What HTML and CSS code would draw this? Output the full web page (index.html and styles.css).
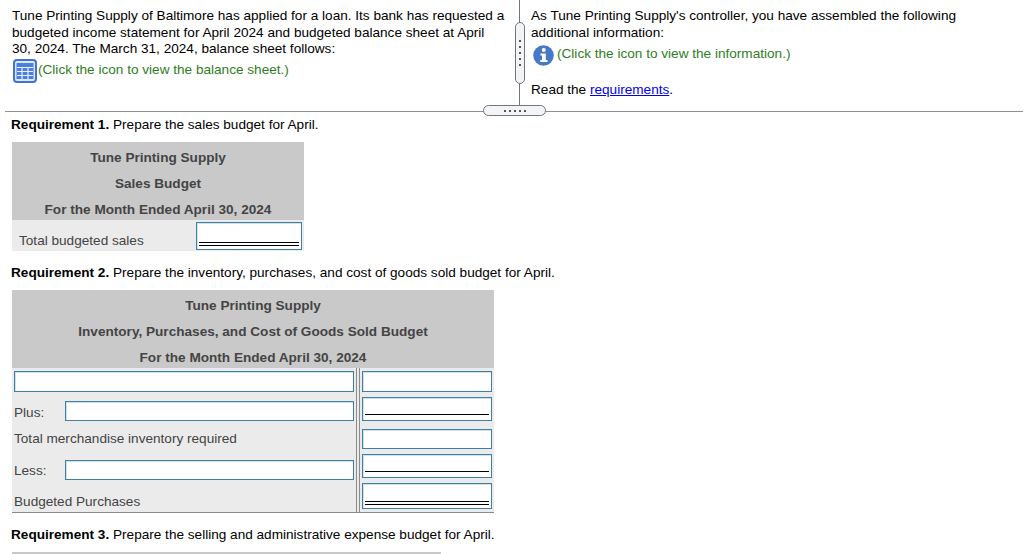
FILE: index.html
```html
<!DOCTYPE html>
<html lang="en">
<head>
<meta charset="utf-8">
<title>Tune Printing Supply</title>
<link rel="stylesheet" href="styles.css">
</head>
<body>
<div class="top">
  <div class="pane-left">
    <p class="intro">Tune Printing Supply of Baltimore has applied for a loan. Its bank has requested a budgeted income statement for April 2024 and budgeted balance sheet at April 30, 2024. The March 31, 2024, balance sheet follows:</p>
    <p class="click click-grid">
      <svg class="icon-grid" width="24" height="24" viewBox="0 0 24 24"><rect x="1" y="1" width="22" height="22" rx="3" fill="#dfe8f8" stroke="#3f74d6" stroke-width="2"/><rect x="3.500" y="4" width="17" height="16" fill="#4a7fdc"/><path d="M4 8.500H20M4 12.500H20M4 16.500H20M9 8V20M15 8V20" stroke="#e8effb" stroke-width="1.200"/></svg>
      <span>(Click the icon to view the balance sheet.)</span>
    </p>
  </div>
  <div class="pane-right">
    <p class="intro">As Tune Printing Supply's controller, you have assembled the following additional information:</p>
    <p class="click click-info">
      <svg class="icon-info" width="21" height="21" viewBox="0 0 21 21"><circle cx="10.500" cy="10.500" r="10.300" fill="#4678c8"/><circle cx="10.800" cy="5" r="2" fill="#fff"/><path d="M7.500 8.500H12.800V15H14.500V17H7.200V15H9V10.500H7.500Z" fill="#fff"/></svg>
      <span>(Click the icon to view the information.)</span>
    </p>
    <p class="read">Read the <a href="#req">requirements</a>.</p>
  </div>
  <div class="handle-v"><i></i><i></i><i></i><i></i><i></i></div>
  <div class="handle-h"><i></i><i></i><i></i><i></i><i></i></div>
</div>

<main class="content">
  <p class="req first"><b>Requirement 1.</b> Prepare the sales budget for April.</p>
  <section class="sheet sheet-sales">
    <header class="sheet-head">
      <div>Tune Printing Supply</div>
      <div>Sales Budget</div>
      <div>For the Month Ended April 30, 2024</div>
    </header>
    <div class="sales-row">
      <span class="label">Total budgeted sales</span>
      <div class="box box-sales"><span class="rule double"></span></div>
    </div>
  </section>

  <p class="req second"><b>Requirement 2.</b> Prepare the inventory, purchases, and cost of goods sold budget for April.</p>
  <section class="sheet sheet-inv">
    <header class="sheet-head">
      <div>Tune Printing Supply</div>
      <div>Inventory, Purchases, and Cost of Goods Sold Budget</div>
      <div>For the Month Ended April 30, 2024</div>
    </header>
    <div class="inv-body">
      <div class="inv-left">
        <div class="box box-wide"></div>
        <div class="line line-plus"><span class="label tag">Plus:</span><div class="box box-fill"></div></div>
        <div class="label line-total">Total merchandise inventory required</div>
        <div class="line line-less"><span class="label tag">Less:</span><div class="box box-fill"></div></div>
        <div class="label line-budget">Budgeted Purchases</div>
      </div>
      <div class="inv-right">
        <div class="box h21"></div>
        <div class="box h24"><span class="rule single"></span></div>
        <div class="box h20 gap8"></div>
        <div class="box h24"><span class="rule single"></span></div>
        <div class="box h26"><span class="rule double"></span></div>
      </div>
    </div>
  </section>

  <p class="req third"><b>Requirement 3.</b> Prepare the selling and administrative expense budget for April.</p>
  <div class="next-bar"></div>
</main>
</body>
</html>
```

FILE: styles.css
```css
* { box-sizing: border-box; }
html, body { margin: 0; padding: 0; }
body {
  width: 1024px;
  height: 554px;
  overflow: hidden;
  background: #fff;
  color: #000;
  font-family: "Liberation Sans", Arial, sans-serif;
  font-size: 13.6px;
  line-height: 16.5px;
}
p { margin: 0; }

.top {
  position: relative;
  display: flex;
  height: 112px;
  margin-left: 5px;
  margin-right: 1px;
  border-bottom: 1px solid #8c9298;
}
.pane-left {
  width: 515px;
  height: 111px;
  padding: 8px 13px 0 7px;
  border-right: 1px solid #6f767c;
}
.pane-right {
  flex: 1;
  padding: 8px 40px 0 11px;
}
.click {
  display: flex;
  align-items: center;
  color: #2f7d1e;
}
.click-grid { margin-top: 1px; margin-left: 1px; }
.click-grid span { margin-left: 1px; }
.icon-grid { flex: none; }
.click-info { margin-top: 4px; margin-left: 2px; }
.click-info span { margin-left: 3px; margin-top: -2px; }
.icon-info { flex: none; }
.read { margin-top: 16px; }
.read a { color: #0000ee; text-decoration: underline; }

.handle-v {
  position: absolute;
  left: 510px;
  top: 22px;
  width: 10px;
  height: 62px;
  display: flex;
  flex-direction: column;
  align-items: center;
  justify-content: center;
  gap: 4px;
  background: #f3f4f6;
  border: 1px solid #6f767c;
  border-radius: 5px;
}
.handle-v i, .handle-h i {
  display: block;
  width: 2px;
  height: 2px;
  background: #555;
}
.handle-h {
  position: absolute;
  left: 478px;
  top: 105px;
  width: 63px;
  height: 11px;
  display: flex;
  align-items: center;
  justify-content: center;
  gap: 3px;
  background: #f3f4f6;
  border: 1px solid #6f767c;
  border-radius: 6px;
}

.content { padding-left: 12px; }
.req { margin-left: -1px; }
.req.first { margin-top: 5px; }
.req.second { margin-top: 14px; }
.req.third { margin-top: 14px; }

.sheet { background: #ebebeb; color: #444; }
.sheet-sales { width: 292px; height: 109px; margin-top: 8px; }
.sheet-inv { width: 482px; height: 223px; margin-top: 9px; border-bottom: 1px solid #8a8a8a; }
.sheet-head {
  height: 78px;
  padding-top: 3px;
  background: #c9c9c9;
  font-weight: bold;
  text-align: center;
}
.sheet-head div { height: 26px; line-height: 26px; }

.box {
  background: #fff;
  border: 1px solid #3f7fa3;
  box-shadow: inset 1px 1px 0 #d3e2ea;
  position: relative;
}
.rule {
  position: absolute;
  left: 2px;
  right: 2px;
  display: block;
}
.rule.single { bottom: 5px; border-top: 1px solid #000; }
.rule.double { bottom: 3px; height: 4px; border-top: 1px solid #000; border-bottom: 1px solid #000; }

.sales-row {
  display: flex;
  align-items: flex-start;
  justify-content: space-between;
  height: 31px;
  padding: 2px 2px 0 7px;
}
.sales-row .label { margin-top: 11px; }
.box-sales { width: 106px; height: 28px; }

.inv-body { display: flex; height: 144px; }
.inv-left {
  width: 345px;
  padding: 3px 2px 0 2px;
  border-right: 1px solid #8a8a8a;
  display: flex;
  flex-direction: column;
}
.box-wide { height: 21px; width: 340px; }
.line { display: flex; align-items: flex-end; }
.tag { width: 51px; }
.box-fill { width: 289px; height: 20px; }
.line-plus { margin-top: 9px; }
.line-total { margin-top: 10px; }
.line-less { margin-top: 12px; }
.line-budget { margin-top: 14px; }

.inv-right {
  margin-left: 2px;
  flex: 1;
  border-left: 1px solid #8a8a8a;
  padding: 3px 2px 0 2px;
  display: flex;
  flex-direction: column;
  gap: 5px;
}
.h20 { height: 20px; }
.h21 { height: 21px; }
.h24 { height: 24px; }
.h26 { height: 26px; }
.gap8 { margin-top: 3px; }

.next-bar {
  width: 429px;
  height: 3px;
  margin-top: 8px;
  background: #c9c9c9;
}
```
